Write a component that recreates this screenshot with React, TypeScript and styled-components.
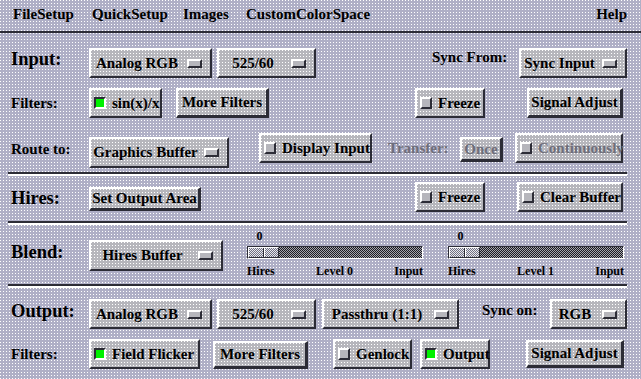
import styled, { createGlobalStyle, css } from 'styled-components';

const PAGE = '#afafc6';
const FACE = '#b6b6bc';
const DARK = '#2c2c36';
const LIGHT = '#ffffff';
const DIM = '#6e6e7a';

// 1px white dot every 3px, like the dithered X display
const dots = css`
    background-image: conic-gradient(at 1px 1px, transparent 75%, #ffffff 0);
    background-size: 3px 3px;
`;

const GlobalStyle = createGlobalStyle`
    body {
        margin: 0;
        background: ${PAGE};
    }
`;

const Window = styled.div`
    width: 641px;
    height: 379px;
    overflow: hidden;
    background-color: ${PAGE};
    ${dots}
    font-family: 'Liberation Serif', 'Times New Roman', serif;
    font-weight: bold;
    font-size: 15px;
    line-height: 1;
    color: #000;
`;

const MenuBar = styled.div`
    display: flex;
    box-sizing: border-box;
    height: 33px;
    padding: 7px 14px 0 13px;
    border-bottom: 2px solid ${DARK};
`;

const MenuItem = styled.div<{ $w?: number }>`
    width: ${(p) => (p.$w ? `${p.$w}px` : 'auto')};
    &:last-child {
        margin-left: auto;
    }
`;

const Row = styled.div<{ $mt: number; $h: number }>`
    display: flex;
    align-items: flex-start;
    margin-top: ${(p) => p.$mt}px;
    height: ${(p) => p.$h}px;
`;

const RowLabel = styled.div<{ $big?: boolean; $dy: number }>`
    width: 89px;
    box-sizing: border-box;
    padding-left: 11px;
    margin-top: ${(p) => p.$dy}px;
    font-size: ${(p) => (p.$big ? 18.5 : 15)}px;
`;

const SideLabel = styled.div<{ $w: number; $ml?: number; $dy: number; $dim?: boolean }>`
    width: ${(p) => p.$w}px;
    margin-left: ${(p) => p.$ml ?? 0}px;
    margin-top: ${(p) => p.$dy}px;
    color: ${(p) => (p.$dim ? DIM : '#000')};
`;

const Separator = styled.div<{ $mt: number }>`
    margin: ${(p) => p.$mt}px 14px 0 8px;
    border-top: 2px solid ${DARK};
    border-bottom: 2px solid ${LIGHT};
`;

type Place = { $w: number; $h?: number; $ml?: number; $dy?: number };

const place = css<Place>`
    width: ${(p) => p.$w}px;
    height: ${(p) => p.$h ?? 30}px;
    margin-left: ${(p) => p.$ml ?? 0}px;
    margin-top: ${(p) => p.$dy ?? 0}px;
    flex-shrink: 0;
`;

const raised = css`
    box-sizing: border-box;
    background-color: ${FACE};
    ${dots}
    border-style: solid;
    border-width: 2px;
    border-color: ${LIGHT} ${DARK} ${DARK} ${LIGHT};
`;

const OptionBox = styled.div<Place>`
    ${raised}
    ${place}
    display: flex;
    align-items: center;
    padding-right: 8px;
`;

const OptionText = styled.span`
    flex: 1;
    text-align: center;
    white-space: nowrap;
`;

const CascadeMark = styled.span`
    box-sizing: border-box;
    width: 15px;
    height: 9px;
    margin-left: 4px;
    background: ${FACE};
    border: 2px solid;
    border-color: ${LIGHT} ${DARK} ${DARK} ${LIGHT};
`;

const ToggleBox = styled.div<Place & { $dim?: boolean }>`
    ${raised}
    ${place}
    display: flex;
    align-items: center;
    gap: 6px;
    padding-left: 3px;
    white-space: nowrap;
    color: ${(p) => (p.$dim ? DIM : '#000')};
`;

const Indicator = styled.span<{ $on?: boolean }>`
    box-sizing: border-box;
    width: 12px;
    height: 12px;
    flex-shrink: 0;
    border: 2px solid;
    border-color: ${(p) =>
        p.$on ? `${DARK} ${LIGHT} ${LIGHT} ${DARK}` : `${LIGHT} ${DARK} ${DARK} ${LIGHT}`};
    background: ${(p) => (p.$on ? '#00f000' : FACE)};
`;

const PushBox = styled.div<Place & { $dim?: boolean }>`
    ${raised}
    ${place}
    border-width: 2px 3px 3px 2px;
    display: flex;
    align-items: center;
    justify-content: center;
    white-space: nowrap;
    color: ${(p) => (p.$dim ? DIM : '#000')};
`;

const ScaleBox = styled.div<{ $ml: number }>`
    width: 176px;
    margin-left: ${(p) => p.$ml}px;
    display: flex;
    flex-direction: column;
    font-size: 12px;
`;

const ScaleValue = styled.div`
    width: 25px;
    height: 12px;
    text-align: center;
    margin-bottom: 4px;
`;

const Trough = styled.div`
    box-sizing: border-box;
    height: 13px;
    border: 1px solid;
    border-color: ${DARK} ${LIGHT} ${LIGHT} ${DARK};
    background: repeating-conic-gradient(#1c1c22 0% 25%, #a4a4ac 0% 50%) 0 0 / 2px 2px;
`;

const Thumb = styled.div`
    position: relative;
    box-sizing: border-box;
    width: 31px;
    height: 100%;
    border: 1px solid;
    border-color: ${LIGHT} ${DARK} ${DARK} ${LIGHT};
    background: repeating-conic-gradient(#e8e8f0 0% 25%, #707080 0% 50%) 0 0 / 2px 2px;

    &::after {
        content: '';
        position: absolute;
        left: 14px;
        top: 0;
        bottom: 0;
        width: 1px;
        background: ${DARK};
        box-shadow: 1px 0 0 ${LIGHT};
    }
`;

const ScaleLabels = styled.div`
    display: flex;
    justify-content: space-between;
    margin-top: 6px;
`;

function OptionMenu({ label, ...p }: Place & { label: string }) {
    return (
        <OptionBox {...p}>
            <OptionText>{label}</OptionText>
            <CascadeMark />
        </OptionBox>
    );
}

function Toggle({ label, on, dim, ...p }: Place & { label: string; on?: boolean; dim?: boolean }) {
    return (
        <ToggleBox $dim={dim} {...p}>
            <Indicator $on={on} />
            {label}
        </ToggleBox>
    );
}

function Scale({ ml, level }: { ml: number; level: string }) {
    return (
        <ScaleBox $ml={ml}>
            <ScaleValue>0</ScaleValue>
            <Trough>
                <Thumb />
            </Trough>
            <ScaleLabels>
                <span>Hires</span>
                <span>{level}</span>
                <span>Input</span>
            </ScaleLabels>
        </ScaleBox>
    );
}

export default function App() {
    return (
        <Window>
            <GlobalStyle />
            <MenuBar>
                <MenuItem $w={79}>FileSetup</MenuItem>
                <MenuItem $w={91}>QuickSetup</MenuItem>
                <MenuItem $w={63}>Images</MenuItem>
                <MenuItem>CustomColorSpace</MenuItem>
                <MenuItem>Help</MenuItem>
            </MenuBar>

            <Row $mt={15} $h={30}>
                <RowLabel $big $dy={1.5}>Input:</RowLabel>
                <OptionMenu label="Analog RGB" $w={123} />
                <OptionMenu label="525/60" $w={99} $ml={5} />
                <SideLabel $w={87} $ml={116} $dy={1.5}>Sync From:</SideLabel>
                <OptionMenu label="Sync Input" $w={108} />
            </Row>
            <Row $mt={10} $h={30}>
                <RowLabel $dy={7.5}>Filters:</RowLabel>
                <Toggle label="sin(x)/x" on $w={73} />
                <PushBox $w={93} $ml={14}>More Filters</PushBox>
                <Toggle label="Freeze" $w={70} $ml={146} />
                <PushBox $w={96} $ml={42}>Signal Adjust</PushBox>
            </Row>
            <Row $mt={15} $h={35}>
                <RowLabel $dy={8.5}>Route to:</RowLabel>
                <OptionMenu label="Graphics Buffer" $w={140} $h={31} $dy={4} />
                <Toggle label="Display Input" $w={113} $ml={30} />
                <SideLabel $w={72} $ml={16} $dy={7.5} $dim>Transfer:</SideLabel>
                <PushBox $w={43} $h={25} $dy={4} $dim>Once</PushBox>
                <Toggle label="Continuously" $w={108} $ml={12} dim />
            </Row>
            <Separator $mt={4} />

            <Row $mt={6} $h={30}>
                <RowLabel $big $dy={6.5}>Hires:</RowLabel>
                <PushBox $w={112} $h={24} $dy={5}>Set Output Area</PushBox>
                <Toggle label="Freeze" $w={70} $ml={214} />
                <Toggle label="Clear Buffer" $w={106} $ml={32} />
            </Row>
            <Separator $mt={9} />

            <Row $mt={5} $h={46}>
                <RowLabel $big $dy={12.5}>Blend:</RowLabel>
                <OptionMenu label="Hires Buffer" $w={134} $h={31} $dy={10} />
                <Scale ml={24} level="Level 0" />
                <Scale ml={25} level="Level 1" />
            </Row>
            <Separator $mt={8} />

            <Row $mt={11} $h={30}>
                <RowLabel $big $dy={2.5}>Output:</RowLabel>
                <OptionMenu label="Analog RGB" $w={123} />
                <OptionMenu label="525/60" $w={99} $ml={5} />
                <OptionMenu label="Passthru (1:1)" $w={137} $ml={6} />
                <SideLabel $w={68} $ml={23} $dy={3.5}>Sync on:</SideLabel>
                <OptionMenu label="RGB" $w={77} />
            </Row>
            <Row $mt={10} $h={30}>
                <RowLabel $dy={7.5}>Filters:</RowLabel>
                <Toggle label="Field Flicker" on $w={111} />
                <PushBox $w={95} $h={28} $ml={13} $dy={2}>More Filters</PushBox>
                <Toggle label="Genlock" $w={79} $ml={25} />
                <Toggle label="Output" on $w={70} $ml={8} />
                <PushBox $w={98} $h={28} $ml={36} $dy={1}>Signal Adjust</PushBox>
            </Row>
        </Window>
    );
}
